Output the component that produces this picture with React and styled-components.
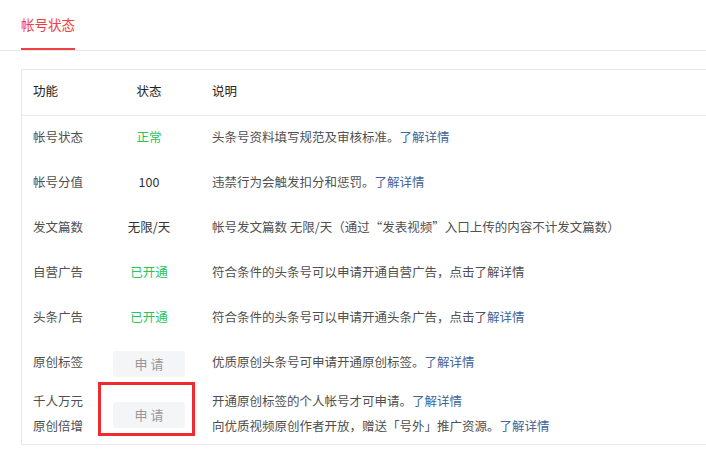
import React from "react";
import styled, { createGlobalStyle } from "styled-components";

const GlobalStyle = createGlobalStyle`
  body {
    margin: 0;
    background: #fff;
    font-family: "Noto Sans CJK SC", "Liberation Sans", sans-serif;
    overflow: hidden;
  }
`;

const rows = [
  {
    name: "帐号状态",
    status: { kind: "ok", text: "正常" },
    desc: [["头条号资料填写规范及审核标准。", "了解详情"]],
  },
  {
    name: "帐号分值",
    status: { kind: "plain", text: "100" },
    desc: [["违禁行为会触发扣分和惩罚。", "了解详情"]],
  },
  {
    name: "发文篇数",
    status: { kind: "plain", text: "无限/天" },
    desc: [["帐号发文篇数 无限/天（通过“发表视频”入口上传的内容不计发文篇数）"]],
  },
  {
    name: "自营广告",
    status: { kind: "ok", text: "已开通" },
    desc: [["符合条件的头条号可以申请开通自营广告，点击了解详情"]],
  },
  {
    name: "头条广告",
    status: { kind: "ok", text: "已开通" },
    desc: [["符合条件的头条号可以申请开通头条广告，点击了", "解详情"]],
  },
  {
    name: "原创标签",
    status: { kind: "apply" },
    desc: [["优质原创头条号可申请开通原创标签。", "了解详情"]],
  },
  {
    name: ["千人万元", "原创倍增"],
    status: { kind: "apply", marked: true },
    desc: [
      ["开通原创标签的个人帐号才可申请。", "了解详情"],
      ["向优质视频原创作者开放，赠送「号外」推广资源。", "了解详情"],
    ],
  },
];

const Page = styled.div`
  width: 706px;
  overflow: hidden;
`;

const TabBar = styled.div`
  display: flex;
  padding: 0 21px;
  border-bottom: 1px solid #e8e8e8;
`;

const Tab = styled.div`
  box-sizing: border-box;
  height: 50px;
  padding-top: 14px;
  font-size: 13.5px;
  line-height: 20px;
  color: #f04142;
  border-bottom: 2px solid #f04142;
`;

const Table = styled.div`
  width: 720px;
  margin: 18px 0 0 21px;
  border: 1px solid #e8e8e8;
  font-size: 12.5px;
`;

const Row = styled.div`
  display: grid;
  grid-template-columns: 78px 98px 1fr;
  min-height: 45px;
  border-bottom: ${(p) => (p.$head ? "1px solid #e8e8e8" : "none")};
`;

const Cell = styled.div`
  position: relative;
  box-sizing: border-box;
  display: flex;
  flex-direction: column;
  justify-content: center;
  padding: 2px 0 6px;
  line-height: 25px;
  white-space: nowrap;
  color: ${(p) => (p.$head ? "#222" : "#505050")};
`;

const NameCell = styled(Cell)`
  padding-left: 11px;
`;

const StatusCell = styled(Cell)`
  align-items: center;
  color: ${(p) =>
    p.$kind === "ok" ? "#2ac35c" : p.$head ? "#222" : "#333"};
`;

const DescCell = styled(Cell)`
  padding-left: 14px;
`;

const More = styled.span`
  color: #406599;
`;

const ApplyButton = styled.div`
  width: 72px;
  height: 26px;
  margin-top: 4px;
  line-height: 26px;
  text-align: center;
  border-radius: 3px;
  background: #f4f5f6;
  color: #999;
  font-size: 13px;
`;

const Marker = styled.div`
  position: absolute;
  left: -2px;
  top: -4px;
  width: 97px;
  height: 54px;
  box-sizing: border-box;
  border: 3px solid #ef2b2f;
`;

const toLines = (v) => (Array.isArray(v) ? v : [v]);

const App = () => {
  return (
    <Page>
      <GlobalStyle />
      <TabBar>
        <Tab>帐号状态</Tab>
      </TabBar>
      <Table>
        <Row $head>
          <NameCell $head>功能</NameCell>
          <StatusCell $head>状态</StatusCell>
          <DescCell $head>说明</DescCell>
        </Row>
        {rows.map((row, i) => (
          <Row key={i}>
            <NameCell>
              {toLines(row.name).map((n) => (
                <div key={n}>{n}</div>
              ))}
            </NameCell>
            <StatusCell $kind={row.status.kind}>
              {row.status.kind === "apply" ? (
                <ApplyButton>申 请</ApplyButton>
              ) : (
                row.status.text
              )}
              {row.status.marked && <Marker />}
            </StatusCell>
            <DescCell>
              {row.desc.map(([text, link], j) => (
                <div key={j}>
                  {text}
                  {link && <More>{link}</More>}
                </div>
              ))}
            </DescCell>
          </Row>
        ))}
      </Table>
    </Page>
  );
};

export default App;
